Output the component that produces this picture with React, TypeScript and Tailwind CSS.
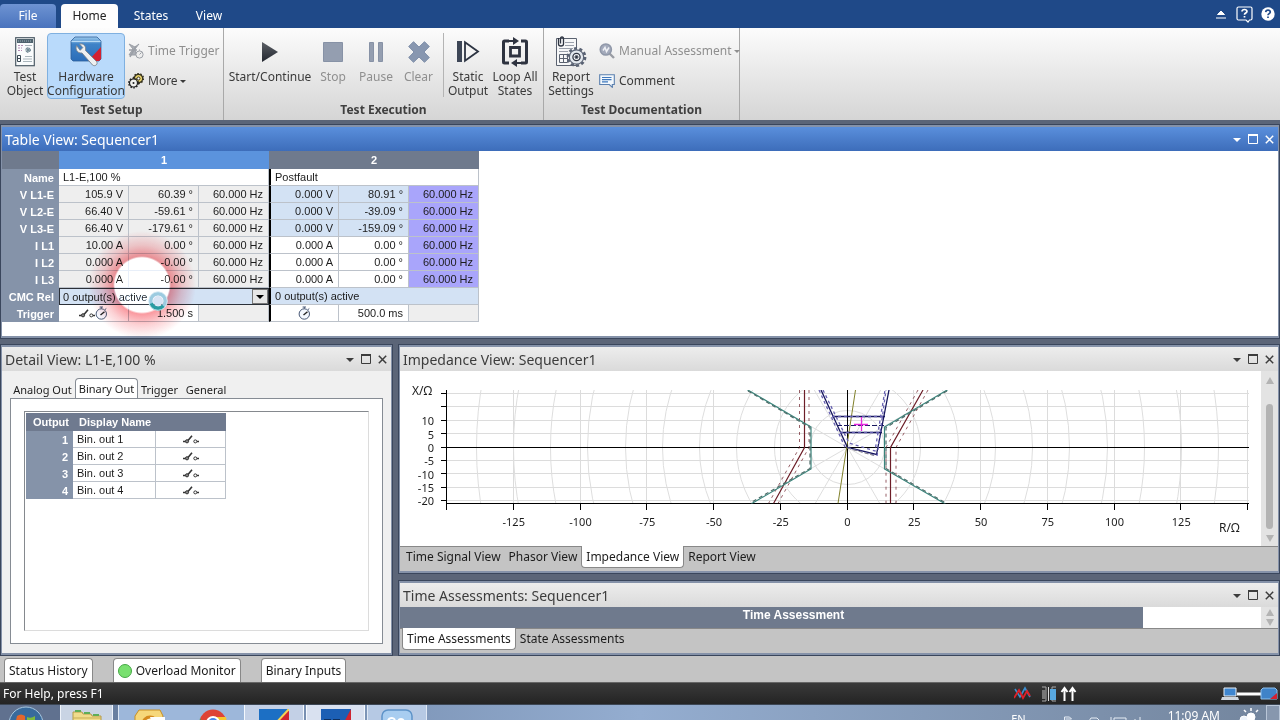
import React from 'react';

type Tone = 'gray' | 'blue' | 'white';

interface Signal {
    name: string;
    fault: [string, string, string];
    post: [string, string, string];
    postTone: Tone;
}

const signals: Signal[] = [
    { name: 'V L1-E', fault: ['105.9 V', '60.39 °', '60.000 Hz'], post: ['0.000 V', '80.91 °', '60.000 Hz'], postTone: 'blue' },
    { name: 'V L2-E', fault: ['66.40 V', '-59.61 °', '60.000 Hz'], post: ['0.000 V', '-39.09 °', '60.000 Hz'], postTone: 'blue' },
    { name: 'V L3-E', fault: ['66.40 V', '-179.61 °', '60.000 Hz'], post: ['0.000 V', '-159.09 °', '60.000 Hz'], postTone: 'blue' },
    { name: 'I L1', fault: ['10.00 A', '0.00 °', '60.000 Hz'], post: ['0.000 A', '0.00 °', '60.000 Hz'], postTone: 'white' },
    { name: 'I L2', fault: ['0.000 A', '-0.00 °', '60.000 Hz'], post: ['0.000 A', '0.00 °', '60.000 Hz'], postTone: 'white' },
    { name: 'I L3', fault: ['0.000 A', '-0.00 °', '60.000 Hz'], post: ['0.000 A', '0.00 °', '60.000 Hz'], postTone: 'white' },
];

const outputs = ['Bin. out 1', 'Bin. out 2', 'Bin. out 3', 'Bin. out 4'];

/* ---------- small icons ---------- */

const SwitchIcon = () => (
    <svg width="16" height="9" viewBox="0 0 16 9" fill="none" stroke="#333" strokeWidth="1">
        <path d="M0 6.500h2.500M5 5.500L9 .8M14 6.500h2" strokeWidth="1.600" />
        <circle cx="4" cy="6.300" r="1.600" fill="#888" />
        <circle cx="12.300" cy="6.400" r="1.500" />
    </svg>
);

const StopwatchIcon = () => (
    <svg width="13" height="14" viewBox="0 0 13 14" fill="none" stroke="#4b5b78">
        <circle cx="6.300" cy="8" r="5.200" fill="#f4f8ff" />
        <path d="M6.300 2.800V1M4.600 1h3.400M10 3.600l1.300-1.100" />
        <path d="M5.500 9l4-3.200" stroke="#222" strokeWidth="1.400" />
    </svg>
);

const TestObjectIcon = () => (
    <svg width="20" height="30" viewBox="0 0 20 30">
        <rect x=".7" y=".7" width="18.600" height="28" fill="#fafcfd" stroke="#4d5b66" strokeWidth="1.200" />
        <rect x="2" y="2" width="16" height="4" fill="#4f636e" />
        <path d="M3 4h13" stroke="#9fb3bb" strokeDasharray="1 1" />
        <path d="M3 8.500h5M3 11h4M3 13.500h4" stroke="#b58db5" strokeDasharray="2 1" />
        <path d="M10 8.500h7M10 19.500h7M8 22h9M8 24.500h9" stroke="#aab6bc" />
        <path d="M13 10.500v5M10.500 13h5" stroke="#54707d" strokeWidth="1.200" />
        <circle cx="13" cy="13" r="2.300" fill="none" stroke="#54707d" strokeDasharray="2 1.600" />
        <path d="M2.500 18.500h3v6h-3zM2.500 21.500h3" fill="none" stroke="#3c4a54" />
    </svg>
);

const HardwareIcon = () => (
    <svg width="32" height="32" viewBox="0 0 32 32">
        <defs>
            <linearGradient id="hwBox" x1="0" y1="0" x2="0" y2="1">
                <stop offset="0" stopColor="#9cc9ec" />
                <stop offset=".3" stopColor="#3f83c8" />
                <stop offset="1" stopColor="#2b6db8" />
            </linearGradient>
        </defs>
        <path d="M1 5l4-4h22l4 4v18l-2 2H3l-2-2z" fill="url(#hwBox)" stroke="#2d6099" strokeWidth=".8" />
        <path d="M1.500 5.500h29" stroke="#b9dbf5" strokeWidth="1.200" />
        <path d="M31 11v12l-2 2H18z" fill="#d3202f" />
        <path
            d="M6.500 9.500c-1.500 4 1 8 5.500 7.500l10.500 12c2.500 2 6-1 4-3.500l-11-11c1-4-2-7.500-6-6.500l3.300 3.600-2.600 2.700z"
            fill="#eef0f1"
            stroke="#77818a"
            strokeWidth=".9"
        />
    </svg>
);

const TimeTriggerIcon = () => (
    <svg width="16" height="16" viewBox="0 0 16 16" fill="none" stroke="#9b9fa6">
        <path d="M1 1l4 5-4 6h7l-1-6 4-5-4 3z" fill="#aaaeb5" />
        <path d="M2 14L8 3M1 7h8" strokeWidth="1.500" />
        <circle cx="11.500" cy="11.500" r="3.600" fill="#eee" />
        <path d="M11.500 11.500l2-2M11.500 7.500V6.500" />
    </svg>
);

const GearsIcon = () => (
    <svg width="16" height="16" viewBox="0 0 16 16" fill="none">
        <circle cx="10.500" cy="5.500" r="4.200" fill="#e8d36c" stroke="#37331f" strokeWidth="1.200" />
        <circle cx="10.500" cy="5.500" r="5" stroke="#37331f" strokeWidth="1.300" strokeDasharray="1.600 1.500" />
        <circle cx="10.500" cy="5.500" r="1.500" fill="#fff" stroke="#37331f" />
        <circle cx="5.500" cy="10" r="4" fill="#f1f1ee" stroke="#222" strokeWidth="1.200" />
        <circle cx="5.500" cy="10" r="4.800" stroke="#222" strokeWidth="1.300" strokeDasharray="1.600 1.400" />
        <circle cx="5.500" cy="10" r="1" fill="#222" />
    </svg>
);

const PlayIcon = () => (
    <svg width="18" height="22" viewBox="0 0 18 22">
        <defs>
            <linearGradient id="play" x1="0" y1="0" x2="0" y2="1">
                <stop offset="0" stopColor="#5c6066" />
                <stop offset="1" stopColor="#22262f" />
            </linearGradient>
        </defs>
        <path d="M1 1l16 10L1 21z" fill="url(#play)" />
    </svg>
);

const StopIcon = () => (
    <svg width="20" height="20" viewBox="0 0 20 20">
        <path d="M.5.5h19v19H.5z" fill="#949eb0" stroke="#8792a6" />
    </svg>
);

const PauseIcon = () => (
    <svg width="16" height="20" viewBox="0 0 16 20">
        <path d="M1.500 .5h4v19h-4zM10.500 .5h4v19h-4z" fill="#949eb0" stroke="#8792a6" />
    </svg>
);

const ClearIcon = () => (
    <svg width="22" height="22" viewBox="0 0 22 22">
        <path d="M5.500.7L11 6 16.500.7l4.800 4.800L16 11l5.300 5.500-4.800 4.800L11 16l-5.500 5.300L.7 16.500 6 11 .7 5.500z" fill="#8897b0" stroke="#7f8fa9" />
    </svg>
);

const StaticOutputIcon = () => (
    <svg width="24" height="24" viewBox="0 0 24 24">
        <path d="M1 1h5v21H1z" fill="#3d4656" />
        <path d="M9 2.200l13 9.300-13 9.300z" fill="#f4f4f4" stroke="#2d3442" strokeWidth="1.800" />
    </svg>
);

const LoopIcon = () => (
    <svg width="28" height="30" viewBox="0 0 28 30" fill="none" stroke="#2e3340" strokeWidth="3">
        <path d="M20 4H24.500q1 0 1 1V25q0 1-1 1H20M8 26H3.500q-1 0-1-1V5q0-1 1-1H8" />
        <path d="M9.500 10.500h9v8.500h-9z" strokeWidth="2.800" />
        <path d="M12 0v8l6-4zM16 22v8l-6-4z" fill="#2e3340" stroke="none" />
        <path d="M8 4h5M15 26h5" strokeWidth="2" />
    </svg>
);

const ReportIcon = () => (
    <svg width="32" height="32" viewBox="0 0 32 32" fill="none" stroke="#5b6270">
        <path d="M1.500 2.500h20v27h-20z" fill="#f6f7f8" />
        <path d="M10 6.500h9M10 9.500h9M4 12.500h14M4 15.500h9" stroke="#9aa0ab" />
        <path d="M4.500 18.500h8v8h-8zM4.500 22.500h8M8.500 18.500v8" />
        <path d="M3.500 2v6q0 2 2.500 2t2.500-2V3q0-2-1.500-2T5.500 3v4.500" strokeWidth="1.300" stroke="#2f3542" />
        <circle cx="21.500" cy="21" r="8.600" strokeWidth="2.600" strokeDasharray="3 2.400" stroke="#596273" />
        <circle cx="21.500" cy="21" r="7.200" fill="#e3e8ee" stroke="#596273" strokeWidth="1.200" />
        <circle cx="21.500" cy="21" r="3.600" fill="#fff" stroke="#2f3542" strokeWidth="1.300" />
        <circle cx="21.500" cy="21" r="1.600" fill="#2f3542" />
    </svg>
);

const AssessIcon = () => (
    <svg width="16" height="16" viewBox="0 0 16 16" fill="none">
        <path d="M10.500 10.500l4.500 4.500" stroke="#9a9da4" strokeWidth="2.400" />
        <circle cx="6.800" cy="6.500" r="5.600" fill="#a3aabb" stroke="#8f97a8" strokeWidth="1.500" />
        <path d="M4 7.500l2-3 1.500 4 2.500-4" stroke="#eef0f5" strokeWidth="1.500" />
    </svg>
);

const CommentIcon = () => (
    <svg width="16" height="14" viewBox="0 0 16 14">
        <path d="M.7.7h14.600v9.800h-2v2.800l-3-2.800H.7z" fill="#f3f8fd" stroke="#5a7fae" strokeWidth="1.100" />
        <path d="M3 3.500h9.500M3 5.700h9.500M3 7.900h6" stroke="#3f78bd" strokeWidth="1.200" />
    </svg>
);

/* ---------- ribbon ---------- */

interface BigButtonProps {
    icon: React.ReactNode;
    lines: string[];
    width: string;
    active?: boolean;
    disabled?: boolean;
}

const BigButton: React.FC<BigButtonProps> = ({ icon, lines, width, active, disabled }) => (
    <button
        disabled={disabled}
        className={`flex h-[66px] shrink-0 flex-col items-center rounded-sm border whitespace-nowrap leading-[14px] ${width} ${active
            ? 'border-[#7fb0e0] bg-[#b9dafb]'
            : 'border-transparent'
            } ${disabled ? 'text-[#8f8f8f]' : 'text-[#3a3a3a]'}`}
    >
        <span className="flex h-9 items-center justify-center">{icon}</span>
        {lines.map((line) => (
            <span key={line}>{line}</span>
        ))}
    </button>
);

const SmallButton: React.FC<{ icon: React.ReactNode; label: string; disabled?: boolean; menu?: boolean }> = ({ icon, label, disabled, menu }) => (
    <button
        disabled={disabled}
        className={`flex h-[30px] items-center gap-1 whitespace-nowrap ${disabled ? 'text-[#8f8f8f]' : 'text-[#3a3a3a]'}`}
    >
        {icon}
        {label}
        {menu && <span className="-ml-0.5 border-x-3 border-t-3 border-x-transparent border-t-current" />}
    </button>
);

const RibbonGroup: React.FC<{ title: string; width: string; children: React.ReactNode }> = ({ title, width, children }) => (
    <section className={`flex shrink-0 flex-col border-r border-[#a9a9a9] pt-[5px] ${width}`}>
        <div className="flex flex-1">{children}</div>
        <h2 className="pb-[3px] text-center font-bold leading-[14px] text-[#3f3f3f]">{title}</h2>
    </section>
);

const Ribbon = () => (
    <header className="shrink-0 text-xs">
        <div className="flex h-7 items-end bg-[#1f4988] text-white">
            <button className="h-6 w-14 rounded-t-sm bg-linear-to-b from-[#6e93d2] to-[#4973bd]">File</button>
            <button className="ml-[5px] h-6 w-[57px] rounded-t bg-[#fdfdfd] text-[#222]">Home</button>
            <button className="h-6 w-[66px]">States</button>
            <button className="h-6 w-[50px]">View</button>
            <div className="mr-[5px] ml-auto flex h-7 items-center gap-2">
                <button aria-label="Minimize ribbon" className="mr-0.5">
                    <svg width="10" height="9" viewBox="0 0 10 9" stroke="#fff">
                        <path d="M1.500 4.500L5 1l3.500 3.500z" fill="#fff" />
                        <path d="M0 8h10" />
                    </svg>
                </button>
                <button aria-label="Context help">
                    <svg width="17" height="17" viewBox="0 0 17 17" fill="none" stroke="#fff" strokeWidth="1.200">
                        <path d="M2.500 1h12q1.500 0 1.500 1.500v10q0 1.500-1.500 1.500h-1l-1.500 2-2-2H2.500Q1 14 1 12.500v-10Q1 1 2.500 1z" />
                        <path d="M6 5.500q.2-2 2.500-2T11 5.300q0 1.200-1.400 1.800-1.100.5-1.100 1.600M8.500 10v1.600" strokeWidth="1.700" />
                    </svg>
                </button>
                <button aria-label="Help">
                    <svg width="14" height="14" viewBox="0 0 14 14" fill="none">
                        <circle cx="7" cy="7" r="6.700" fill="#fff" />
                        <path d="M4.700 5.200q.2-2.100 2.300-2.100t2.300 1.900q0 1-1.300 1.700-1 .5-1 1.500M7 9.400v1.700" stroke="#1f4988" strokeWidth="1.700" />
                    </svg>
                </button>
            </div>
        </div>
        <div className="flex h-[92px] bg-linear-to-b from-[#fcfcfc] to-[#d5d5d5]">
            <RibbonGroup title="Test Setup" width="w-[224px]">
                <BigButton icon={<TestObjectIcon />} lines={['Test', 'Object']} width="ml-[3px] w-11" />
                <BigButton icon={<HardwareIcon />} lines={['Hardware', 'Configuration']} width="w-[78px]" active />
                <div className="ml-[3px] flex flex-col pt-[3px]">
                    <SmallButton icon={<TimeTriggerIcon />} label="Time Trigger" disabled />
                    <SmallButton icon={<GearsIcon />} label="More" menu />
                </div>
            </RibbonGroup>
            <RibbonGroup title="Test Execution" width="w-[320px]">
                <BigButton icon={<PlayIcon />} lines={['Start/Continue']} width="ml-[5px] w-[82px]" />
                <BigButton icon={<StopIcon />} lines={['Stop']} width="w-11" disabled />
                <BigButton icon={<PauseIcon />} lines={['Pause']} width="w-[42px]" disabled />
                <BigButton icon={<ClearIcon />} lines={['Clear']} width="w-[43px]" disabled />
                <div className="ml-[3px] h-16 w-px bg-[#b4b4b4]" />
                <BigButton icon={<StaticOutputIcon />} lines={['Static', 'Output']} width="w-12" />
                <BigButton icon={<LoopIcon />} lines={['Loop All', 'States']} width="w-[46px]" />
            </RibbonGroup>
            <RibbonGroup title="Test Documentation" width="w-[196px]">
                <BigButton icon={<ReportIcon />} lines={['Report', 'Settings']} width="ml-[3px] w-12" />
                <div className="ml-1 flex flex-col pt-[3px]">
                    <SmallButton icon={<AssessIcon />} label="Manual Assessment" disabled menu />
                    <SmallButton icon={<CommentIcon />} label="Comment" />
                </div>
            </RibbonGroup>
        </div>
    </header>
);

/* ---------- docked panels ---------- */

interface PanelProps {
    title: string;
    active?: boolean;
    className?: string;
    children: React.ReactNode;
}

const Panel: React.FC<PanelProps> = ({ title, active, className = '', children }) => (
    <section className={`flex min-w-0 border border-[#3a465c] ${className}`}>
        <div className="flex min-w-0 flex-1 flex-col border-x border-y-2 border-[#8592a9]">
            <div
                className={`flex h-6 shrink-0 items-center pr-1 pl-[3px] ${active
                    ? 'bg-linear-to-b from-[#5a8fdc] to-[#3d6dba] text-white'
                    : 'bg-linear-to-b from-[#ededed] to-[#dadada] text-[#3c3c3c]'
                    }`}
            >
                <h2 className="flex-1 truncate pt-0.5 text-sm">{title}</h2>
                <div className="flex items-center gap-[7px]">
                    <button aria-label="Panel menu" className="pt-0.5">
                        <svg width="8" height="4" viewBox="0 0 8 4" fill="currentColor"><path d="M0 0h8L4 4z" /></svg>
                    </button>
                    <button aria-label="Maximize">
                        <svg width="10" height="10" viewBox="0 0 10 10" fill="none" stroke="currentColor">
                            <path d="M.5 1h9v8.500h-9z" />
                            <path d="M0 1h10" strokeWidth="2" />
                        </svg>
                    </button>
                    <button aria-label="Close">
                        <svg width="9" height="9" viewBox="0 0 9 9" stroke="currentColor" strokeWidth="1.500"><path d="M.8.8l7.400 7.400M8.200.8L.8 8.200" /></svg>
                    </button>
                </div>
            </div>
            {children}
        </div>
    </section>
);

const tones: Record<Tone, string> = {
    gray: 'bg-[#eeeeee]',
    blue: 'bg-[#d3e2f4]',
    white: 'bg-white',
};

const cell = 'h-[17px] border-r border-b border-[#bcc2ca] leading-4';
const rowHead = 'h-[17px] bg-[#8593a9] pr-[5px] text-right font-bold leading-4 text-white';
const divider = 'border-l-2 border-l-black';

const SequenceTable = () => (
    <table className="w-[477px] table-fixed border-separate border-spacing-0 text-[11px] text-[#1c1c1c]">
        <colgroup>
            <col className="w-[57px]" />
            <col className="w-[70px]" />
            <col className="w-[70px]" />
            <col className="w-[70px]" />
            <col className="w-[70px]" />
            <col className="w-[70px]" />
            <col className="w-[70px]" />
        </colgroup>
        <thead>
            <tr className="h-[18px] leading-[18px] text-white">
                <th className="bg-[#6f7a8d]" />
                <th colSpan={3} className="bg-[#5b93dd]">1</th>
                <th colSpan={3} className="bg-[#6f7a8d]">2</th>
            </tr>
        </thead>
        <tbody>
            <tr>
                <th className={rowHead}>Name</th>
                <td colSpan={3} className={`${cell} pl-1`}>L1-E,100 %</td>
                <td colSpan={3} className={`${cell} ${divider} pl-1`}>Postfault</td>
            </tr>
            {signals.map((s) => (
                <tr key={s.name} className="text-right">
                    <th className={rowHead}>{s.name}</th>
                    {s.fault.map((v, i) => (
                        <td key={i} className={`${cell} ${tones.gray} pr-[5px]`}>{v}</td>
                    ))}
                    <td className={`${cell} ${divider} ${tones[s.postTone]} pr-[5px]`}>{s.post[0]}</td>
                    <td className={`${cell} ${tones[s.postTone]} pr-[5px]`}>{s.post[1]}</td>
                    <td className={`${cell} bg-[#a9a5fb] pr-[5px]`}>{s.post[2]}</td>
                </tr>
            ))}
            <tr>
                <th className={rowHead}><label htmlFor="cmc">CMC Rel</label></th>
                <td colSpan={3} className="h-[17px] bg-[#d3e2f4] p-0">
                    <div className="flex h-[17px] border border-[#2b3038]">
                        <select id="cmc" className="flex-1 appearance-none pl-[3px] leading-[14px] outline-none">
                            <option>0 output(s) active</option>
                        </select>
                        <span className="flex w-4 items-center justify-center border border-[#777] bg-[#e6e6e6]">
                            <span className="border-x-4 border-t-4 border-x-transparent border-t-black" />
                        </span>
                    </div>
                </td>
                <td colSpan={3} className={`${cell} ${divider} bg-[#d3e2f4] pl-1`}>0 output(s) active</td>
            </tr>
            <tr className="text-right">
                <th className={rowHead}>Trigger</th>
                <td className={cell}>
                    <span className="flex h-4 items-center justify-center"><SwitchIcon /><StopwatchIcon /></span>
                </td>
                <td className={`${cell} pr-[5px]`}>1.500 s</td>
                <td className={`${cell} ${tones.gray}`} />
                <td className={`${cell} ${divider}`}>
                    <span className="flex h-4 items-center justify-center"><StopwatchIcon /></span>
                </td>
                <td className={`${cell} pr-[5px]`}>500.0 ms</td>
                <td className={`${cell} ${tones.gray}`} />
            </tr>
        </tbody>
    </table>
);

/* busy pointer with its highlight ring, blended so the cells stay readable */
const BusyPointer = () => (
    <>
        <div className="pointer-events-none absolute top-[106px] left-28 size-14 rounded-full bg-[#303030] mix-blend-color-dodge" />
        <div className="pointer-events-none absolute top-20 left-[86px] size-[108px] rounded-full bg-[radial-gradient(circle,transparent_27px,rgba(248,120,128,.75)_29px,rgba(248,140,148,.4)_40px,transparent_54px)] mix-blend-multiply" />
        <svg className="pointer-events-none absolute top-[140px] left-[146px]" width="20" height="20" viewBox="0 0 20 20" fill="none">
            <circle cx="10" cy="10" r="7.500" stroke="#9ccbe0" strokeWidth="4" />
            <path d="M3 12.500A7.500 7.500 0 0 0 15.500 15" stroke="#2a9ca2" strokeWidth="4" />
            <circle cx="10" cy="10" r="9.300" stroke="#e9f4fa" strokeWidth=".8" />
            <circle cx="10" cy="10" r="5" fill="#d9e4f4" />
        </svg>
    </>
);

const DetailTab: React.FC<{ label: string; width: string; active?: boolean }> = ({ label, width, active }) => (
    <button
        role="tab"
        aria-selected={active}
        className={`whitespace-nowrap ${width} ${active
            ? '-mb-px h-[21px] rounded-t border border-b-0 border-[#868c94] bg-white'
            : 'h-4'
            }`}
    >
        {label}
    </button>
);

const DetailView = () => (
    <div className="flex flex-1 flex-col bg-[#f0f0f0] px-2 pt-[7px] pb-[9px] text-[#1c1c1c]">
        <div role="tablist" className="flex h-5 items-end text-[11px]">
            <DetailTab label="Analog Out" width="w-[65px]" />
            <DetailTab label="Binary Out" width="w-[63px]" active />
            <DetailTab label="Trigger" width="w-[43px]" />
            <DetailTab label="General" width="w-[50px]" />
        </div>
        <div className="flex flex-1 border border-[#868c94] bg-white px-[13px] py-3">
            <div className="flex-1 border-t border-r border-b border-l border-t-[#85898e] border-r-[#dcdcdc] border-b-[#dcdcdc] border-l-[#85898e] p-px">
                <table className="w-[200px] table-fixed border-separate border-spacing-0 text-[11px] font-['Liberation_Sans',Arial,sans-serif]">
                    <colgroup>
                        <col className="w-[47px]" />
                        <col className="w-[83px]" />
                        <col className="w-[70px]" />
                    </colgroup>
                    <thead>
                        <tr className="h-[18px] bg-[#6f7a8f] leading-[18px] text-white">
                            <th className="pr-1 text-right">Output</th>
                            <th className="pl-1.5 text-left">Display Name</th>
                            <th />
                        </tr>
                    </thead>
                    <tbody>
                        {outputs.map((o, i) => (
                            <tr key={o}>
                                <th className={rowHead}>{i + 1}</th>
                                <td className={`${cell} pl-1`}>{o}</td>
                                <td className={cell}><span className="flex h-4 items-center justify-center"><SwitchIcon /></span></td>
                            </tr>
                        ))}
                    </tbody>
                </table>
            </div>
        </div>
    </div>
);

/* ---------- impedance plane ---------- */

const OX = 446.5;
const OY = 76.5;
const SCALE = 2.67;
const TOP = 19;
const BOTTOM = 132.5;
const LEFT = 45.5;
const RIGHT = 847.5;

const px = (r: number) => OX + r * SCALE;
const py = (x: number) => OY - x * SCALE;

const rTicks = [-150, -125, -100, -75, -50, -25, 0, 25, 50, 75, 100, 125, 150];
const xTicks = [20, 15, 10, 5, 0, -5, -10, -15, -20];
const radii = [37, 73, 111, 148, 185, 222, 260, 297, 334, 371];
const spokes = [30, 60, 120, 150, 210, 240, 300, 330];

const ImpedancePlot = () => (
    <svg className="min-w-0 flex-1" viewBox="-1 0 861 175" fontSize="11" fill="none">
        <clipPath id="plot"><path d={`M${LEFT} ${TOP}H${RIGHT}V${BOTTOM}H${LEFT}z`} /></clipPath>
        <g stroke="#dcdcdc" shapeRendering="crispEdges">
            {rTicks.map((r) => <path key={r} d={`M${Math.round(px(r)) - 0.5} ${TOP}V${BOTTOM}`} />)}
            {xTicks.map((x) => <path key={x} d={`M${LEFT} ${Math.round(py(x)) - 0.5}H${RIGHT}`} />)}
        </g>
        <g clipPath="url(#plot)" stroke="#dedede">
            {radii.map((r) => <circle key={r} cx={OX} cy={OY} r={r} />)}
            {spokes.map((a) => (
                <path key={a} d={`M${OX} ${OY}l${73 * Math.cos((a * Math.PI) / 180)} ${73 * Math.sin((a * Math.PI) / 180)}`} />
            ))}
        </g>
        <g stroke="#000" shapeRendering="crispEdges">
            <path d={`M${LEFT} ${TOP}V${BOTTOM}H${RIGHT}M${LEFT - 6} ${OY}H${RIGHT}M${OX} ${TOP}V${BOTTOM}`} />
            {rTicks.map((r) => <path key={r} d={`M${Math.round(px(r)) - 0.5} ${BOTTOM}v6`} />)}
            {xTicks.map((x) => <path key={x} d={`M${LEFT} ${Math.round(py(x)) - 0.5}h-6`} />)}
        </g>
        {/* characteristic zones */}
        <g clipPath="url(#plot)">
            <path d="M454.500 19L437 132.500" stroke="#80802a" />
            <g stroke="#6d1e28">
                <path d="M403.500 19v57.500l-31 56M522 19l-32.500 57.500v56" strokeWidth="1.200" />
                <path d="M398.500 19v57.500l-31 56M408 19v57.500l-31 56M517 19l-32 57.500v56M527 19l-32 57.500v56" strokeDasharray="3 4" strokeOpacity=".7" />
            </g>
            <g stroke="#3a857c">
                <path d="M346 18.500l64 37.500v42l-60 35M547 18.500L483.500 56v42l61 35" strokeWidth="1.200" />
                <path d="M347 20l62 36.500v41l-59 34M546 20l-61 36.500v41l59 34" strokeWidth="1.200" strokeDasharray="4 3" stroke="#4d6b68" />
            </g>
            <g stroke="#16165e">
                <path d="M420 19l26.500 57.500 29 7L488 19M431 45.500h53M439 61.500h42" strokeWidth="1.300" />
                <path d="M436 54.500h47" strokeDasharray="5 2" />
                <path d="M418 19l26 57 32 9 9-66M422 19l26 53 26 8 10-61M431 45.500h53M439 61.500h42" strokeWidth="1.300" strokeDasharray="3 3" stroke="#6660b0" />
            </g>
            <path d="M446 77l29 8" stroke="#888" strokeDasharray="4 2" />
            <path d="M453 53.500h14M460.500 46v14" stroke="#e82be0" strokeWidth="1.300" />
        </g>
        <g fill="#1c1c1c">
            <text x="11" y="24" fontSize="12">X/Ω</text>
            {xTicks.slice(2).map((x) => <text key={x} x="33" y={py(x) + 4.5} textAnchor="end">{x}</text>)}
            {rTicks.slice(1, -1).map((r) => <text key={r} x={px(r)} y="155" textAnchor="middle">{r}</text>)}
            <text x="818" y="161" fontSize="12">R/Ω</text>
        </g>
    </svg>
);

const ScrollBar: React.FC<{ thumb?: boolean }> = ({ thumb }) => (
    <div className="flex w-[17px] shrink-0 flex-col items-center justify-between bg-[#e3e3e3] py-0.5">
        <span className={`border-x-4 border-b-[7px] border-x-transparent border-b-[#b3b3b3] ${thumb ? 'mt-1' : ''}`} />
        {thumb && <span className="mt-5 mb-1.5 w-[7px] flex-1 rounded-sm bg-[#b3b3b3]" />}
        <span className={`border-x-4 border-t-[7px] border-x-transparent border-t-[#b3b3b3] ${thumb ? 'mb-0.5' : ''}`} />
    </div>
);

const ViewTabs: React.FC<{ tabs: string[]; current: string }> = ({ tabs, current }) => (
    <div role="tablist" className="flex h-[25px] shrink-0 items-start border-t border-[#888] bg-[#c4c4c4] pl-0.5 text-xs">
        {tabs.map((t) => (
            <button
                key={t}
                role="tab"
                aria-selected={t === current}
                className={`-mt-px h-[22px] px-1 whitespace-nowrap text-[#1c1c1c] ${t === current
                    ? 'rounded-b border border-t-0 border-[#888] bg-white'
                    : ''
                    }`}
            >
                {t}
            </button>
        ))}
    </div>
);

/* ---------- bottom bars ---------- */

const DockTab: React.FC<{ children: React.ReactNode }> = ({ children }) => (
    <button className="flex h-6 items-center gap-1 rounded-t border border-b-0 border-[#888] bg-white px-1 whitespace-nowrap text-[#1c1c1c]">
        {children}
    </button>
);

const StatusBar = () => (
    <footer className="flex h-[22px] shrink-0 items-center border-t border-[#666] bg-linear-to-b from-[#3a3a3a] to-[#242424] pl-[3px] text-xs text-white">
        <span className="flex-1">For Help, press F1</span>
        <svg width="266" height="20" viewBox="0 0 266 20" fill="none">
            <path d="M1 5l5 8 5-9 5 9" stroke="#3b8fd0" strokeWidth="1.600" />
            <path d="M0 14l5-8 4 8 4-7 3 5" stroke="#e02028" strokeWidth="1.800" />
            <path d="M28 3h4v14h-4M42 3h-4v14h4" stroke="#aaa" />
            <path d="M28 6h4v9h-4z" fill="#777" />
            <path d="M34.500 3v14" stroke="#ddd" />
            <path d="M36 5h6v11h-6z" fill="#58a8e0" />
            <path d="M50.500 17V5M47.500 8l3-4 3 4M58.500 17V5M55.500 8l3-4 3 4" stroke="#fff" strokeWidth="2" />
            <path d="M223 10h26" stroke="#fff" strokeWidth="3" />
            <path d="M210 4h12v8h-12z" fill="#3f86cf" stroke="#e8eef5" />
            <path d="M208 13h16l1 3h-18z" fill="#cfd6de" />
            <path d="M247 6l2-2h12l2 2v9h-16z" fill="#3f83c8" stroke="#8fc0ec" />
            <path d="M263 9v6h-7z" fill="#d3202f" />
        </svg>
    </footer>
);

const TaskButton: React.FC<{ label: string; className: string; children: React.ReactNode }> = ({ label, className, children }) => (
    <button aria-label={label} className={`flex justify-center pt-1 ${className}`}>{children}</button>
);

const TaskBar = () => (
    <footer className="flex h-4 shrink-0 overflow-hidden border-t border-[#3c4654] bg-linear-to-r from-[#5f7596] via-[#94add0] to-[#73859d]">
        <TaskButton label="Start" className="w-[60px] bg-[#60718f]">
            <svg width="36" height="36" viewBox="0 0 36 36" className="-mt-1 -ml-2 shrink-0">
                <circle cx="18" cy="19" r="17" fill="#386a9c" stroke="#a8c8e0" />
                <path d="M9 11q4-3 8 0v9H7z" fill="#e4672c" />
                <path d="M19 12q4 2 8-1v9h-8z" fill="#7fba3c" />
            </svg>
        </TaskButton>
        <TaskButton label="Explorer" className="w-[53px] border-x border-[#eef3fa] bg-[#c9d4e4]">
            <svg width="32" height="32" viewBox="0 0 32 32" className="shrink-0">
                <path d="M2 3h9l1 2h8l1 2h9v25H2z" fill="#f0dc8c" stroke="#b59b48" />
                <path d="M4 2h6M13 4h6M22 6h6" stroke="#5fae58" strokeWidth="2" />
                <path d="M2 9h28" stroke="#c9ad54" />
            </svg>
        </TaskButton>
        <TaskButton label="Outlook" className="ml-[5px] w-[63px] border-l border-[#dde7f4] bg-[#9db7da]">
            <svg width="32" height="32" viewBox="0 0 32 32" className="shrink-0">
                <path d="M5 1h21l3 6-5 24H1V7z" fill="#f6d77a" stroke="#c98f22" />
                <circle cx="16" cy="15" r="7" fill="#fff6d8" stroke="#d58a1e" strokeWidth="3" />
                <path d="M16 8h15v20H22z" fill="#fdfdfd" />
            </svg>
        </TaskButton>
        <TaskButton label="Chrome" className="w-[63px] bg-[#9db7da]">
            <svg width="28" height="28" viewBox="0 0 28 28" className="shrink-0">
                <circle cx="14" cy="14" r="13.500" fill="#de4335" />
                <path d="M1 9l9 18Q0 24 .5 13z" fill="#3ca757" />
                <path d="M14 8h13q2 8-4 14l-9-3z" fill="#f6c62d" />
                <circle cx="14" cy="14" r="6" fill="#4a87e8" stroke="#fff" strokeWidth="2" />
            </svg>
        </TaskButton>
        <TaskButton label="Test Universe" className="w-[60px] border-x border-[#f4f8fd] bg-[#c3d0e6]">
            <svg width="30" height="30" viewBox="0 0 30 30" className="shrink-0">
                <path d="M0 0h30v30H0z" fill="#1c6fc4" />
                <path d="M30 0v30H2z" fill="#cf2430" />
                <path d="M30 0L2 30" stroke="#f5d353" strokeWidth="2" />
            </svg>
        </TaskButton>
        <TaskButton label="State Sequencer" className="ml-0.5 w-[59px] border-x border-[#f4f8fd] bg-[#d9e1f0]">
            <svg width="30" height="30" viewBox="0 0 30 30" className="shrink-0">
                <path d="M0 0h30v30H0z" fill="#1c5fb4" />
                <path d="M30 0v30H14z" fill="#cf2430" />
                <path d="M3 11h7M12 11h7" stroke="#10305e" strokeWidth="2" />
            </svg>
        </TaskButton>
        <TaskButton label="Recorder" className="ml-0.5 w-[60px] border-x border-[#dfe8f5] bg-[#b6c9e4]">
            <svg width="32" height="32" viewBox="0 0 32 32" className="shrink-0">
                <rect x="1" y="1" width="30" height="30" rx="6" fill="#a8cdf0" stroke="#5d93c8" strokeWidth="1.500" />
                <path d="M7 13q0-4 4-4 2 0 3 2M17 14q0-4 3-4t3 4M25 14v-3" stroke="#fff" strokeWidth="2" fill="none" />
            </svg>
        </TaskButton>
        <div className="ml-auto flex items-start text-xs leading-4 text-white">
            <span className="mt-1.5 mr-9 text-[11px]">EN</span>
            <svg width="86" height="16" viewBox="0 0 86 16" fill="none" stroke="#e7edf5" className="mr-5">
                <path d="M2.500 16v-4h5l2 2h-6M27 16l2-3h6l3 3M52 13h12v3H52zM49 16v-4M78 16v-4M73 16v-2" />
            </svg>
            <span className="mt-[3px] mr-4 whitespace-nowrap">11:09 AM</span>
            <svg width="28" height="16" viewBox="0 0 28 16" stroke="#fff" className="mr-0.5">
                <path d="M15 3v3M8 5l2 2M22 5l-2 2" strokeWidth="1.500" />
                <circle cx="15" cy="12" r="4" fill="#fff" />
                <circle cx="8" cy="15" r="4" fill="#eef4fb" />
            </svg>
            <span className="h-4 w-3.5 border border-[#b9c6d8] bg-[#8797ae]" />
        </div>
    </footer>
);

export default function App() {
    return (
        <div className="flex h-screen flex-col overflow-hidden bg-[#5b6578] font-['Noto_Sans','Open_Sans',sans-serif]">
            <Ribbon />

            <main className="flex min-h-0 flex-1 flex-col gap-[5px] pt-1">
                <Panel title="Table View: Sequencer1" active className="shrink-0">
                    <div className="relative bg-white pb-3.5 font-['Liberation_Sans',Arial,sans-serif]">
                        <SequenceTable />
                        <BusyPointer />
                    </div>
                </Panel>

                <div className="flex min-h-0 flex-1 gap-[5px]">
                    <Panel title="Detail View: L1-E,100 %" className="w-[393px] shrink-0">
                        <DetailView />
                    </Panel>
                    <div className="flex min-w-0 flex-1 flex-col gap-1.5">
                        <Panel title="Impedance View: Sequencer1" className="min-h-0 flex-1">
                            <div className="flex min-h-0 flex-1 bg-white">
                                <ImpedancePlot />
                                <ScrollBar thumb />
                            </div>
                            <ViewTabs tabs={['Time Signal View', 'Phasor View', 'Impedance View', 'Report View']} current="Impedance View" />
                        </Panel>
                        <Panel title="Time Assessments: Sequencer1" className="shrink-0">
                            <div className="flex h-[21px] bg-white">
                                <table className="mr-[118px] flex-1 font-['Liberation_Sans',Arial,sans-serif] text-xs text-white">
                                    <thead className="block bg-[#6f7a8d]">
                                        <tr className="flex h-[21px]">
                                            <th className="flex-1 pl-11 leading-4">Time Assessment</th>
                                        </tr>
                                    </thead>
                                </table>
                                <ScrollBar />
                            </div>
                            <ViewTabs tabs={['Time Assessments', 'State Assessments']} current="Time Assessments" />
                        </Panel>
                    </div>
                </div>
            </main>

            <nav className="flex h-[26px] shrink-0 items-end bg-[#c4c4c4] pl-1 text-xs">
                <div className="flex gap-5">
                    <DockTab>Status History</DockTab>
                    <DockTab>
                        <span className="size-3.5 rounded-full border border-[#45a845] bg-[#79e070]" />
                        Overload Monitor
                    </DockTab>
                    <DockTab>Binary Inputs</DockTab>
                </div>
            </nav>
            <StatusBar />
            <TaskBar />
        </div>
    );
}
